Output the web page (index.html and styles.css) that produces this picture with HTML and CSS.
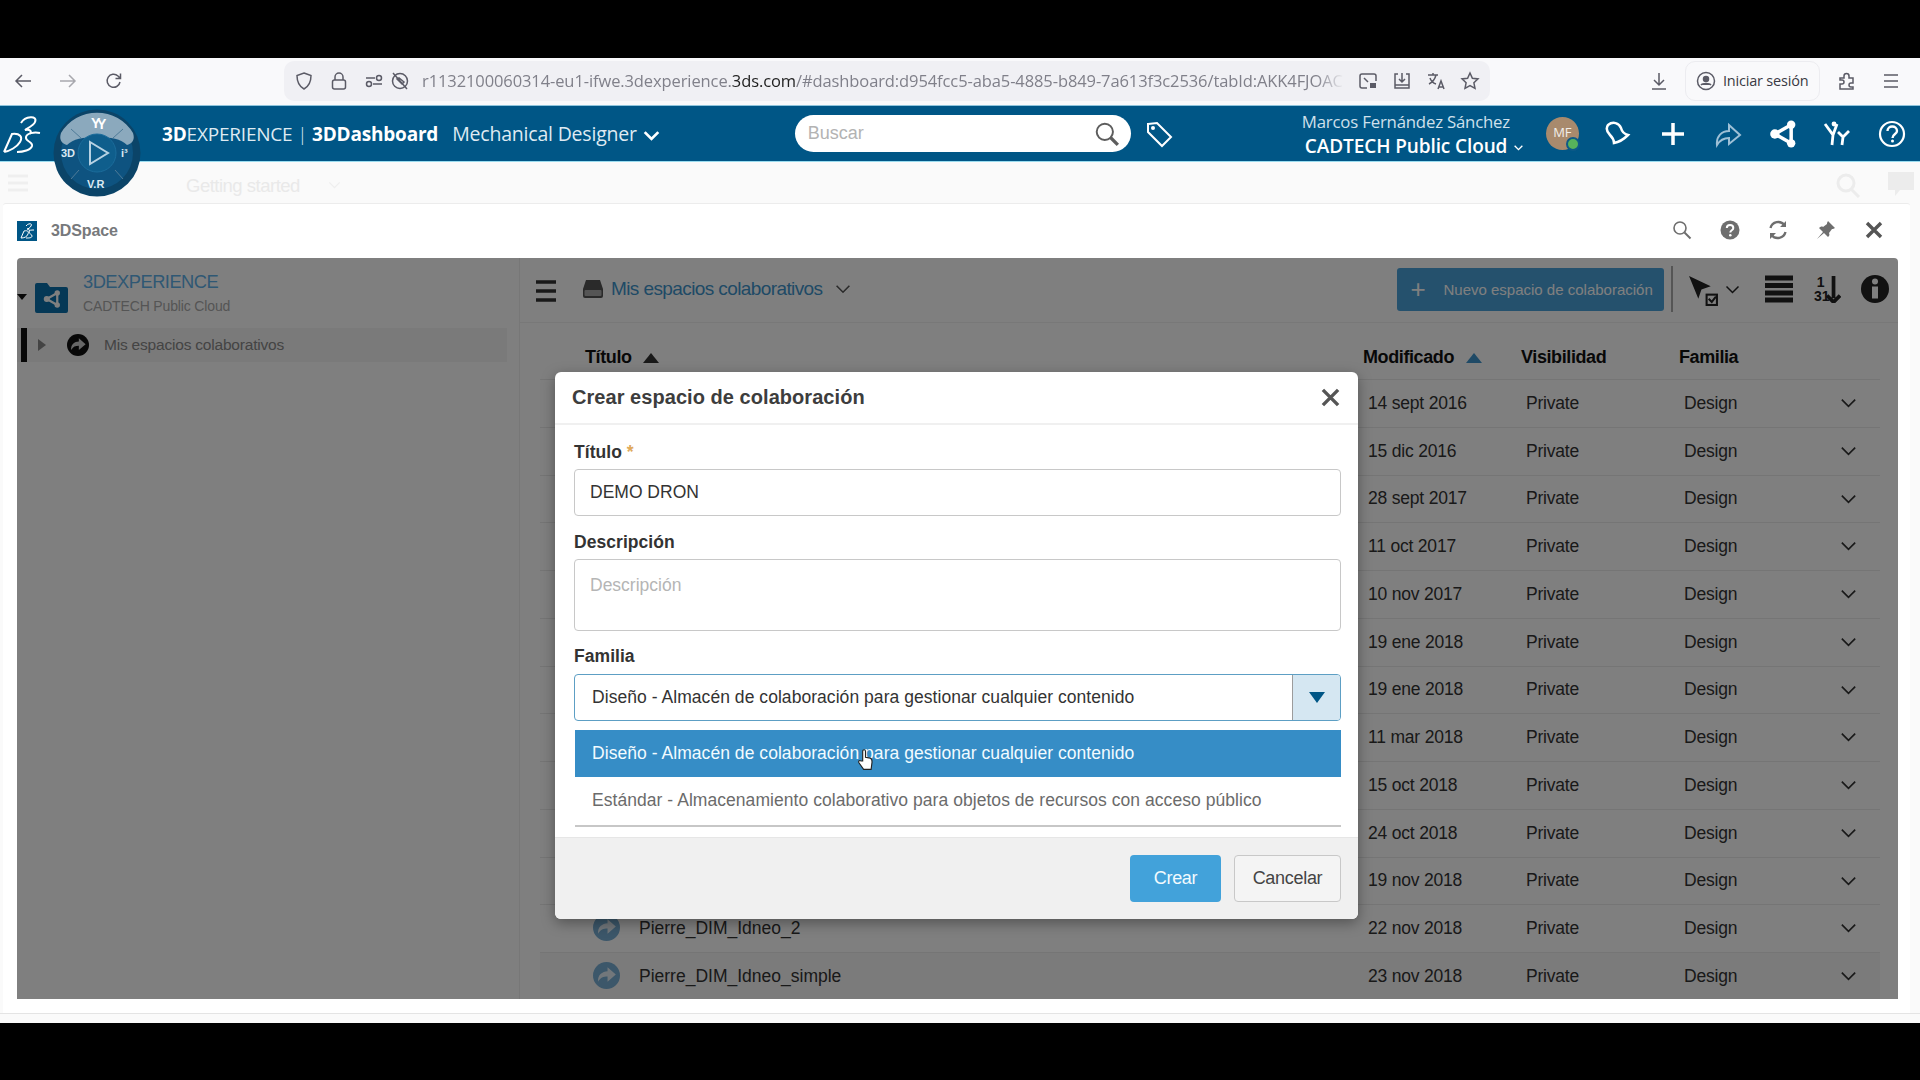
FILE: index.html
```html
<!DOCTYPE html>
<html lang="es">
<head>
<meta charset="utf-8">
<title>3DSpace</title>
<link rel="stylesheet" href="styles.css">
</head>
<body>
<svg class="defs" width="0" height="0">
  <symbol id="space" viewBox="0 0 26 26">
    <circle cx="13" cy="13" r="13" fill="currentColor"/>
    <path d="M5 19c-1-6 4-10 9-10V5l8 7-8 7v-5c-4 0-7 1-9 5z" fill="#fff" opacity=".8"/>
  </symbol>
  <symbol id="chev" viewBox="0 0 20 12">
    <path d="M2 2l8 8 8-8" fill="none" stroke="currentColor" stroke-width="2"/>
  </symbol>
  <symbol id="net" viewBox="0 0 24 24">
    <path d="M19 4L5 12l14 8z" fill="none" stroke="currentColor" stroke-width="3"/>
    <circle cx="19" cy="4" r="3.600" fill="currentColor"/><circle cx="5" cy="12" r="4" fill="currentColor"/><circle cx="19" cy="20" r="3.600" fill="currentColor"/>
  </symbol>
</svg>

<div class="band-top"></div>

<header class="browser">
  <svg class="bi bi-back" viewBox="0 0 20 20"><path d="M18 10H3M9 4l-6 6 6 6"/></svg>
  <svg class="bi bi-fwd" viewBox="0 0 20 20"><path d="M2 10h15M11 4l6 6-6 6"/></svg>
  <svg class="bi bi-reload" viewBox="0 0 20 20"><path d="M16 11a6.500 6.500 0 1 1-2-6l2.500 2.500M16.500 2.500v5h-5"/></svg>
  <div class="urlbar">
    <svg class="bi" viewBox="0 0 20 20"><path d="M10 2l7 2.500c0 6-1.500 10.500-7 13.500C4.500 15 3 10.500 3 4.500z"/></svg>
    <svg class="bi bi-lock" viewBox="0 0 20 20"><rect x="3.500" y="9" width="13" height="9" rx="2"/><path d="M6 9V6a4 4 0 0 1 8 0v3"/></svg>
    <svg class="bi bi-perm" viewBox="0 0 20 20"><path d="M2 7h9M9 13h9"/><circle cx="15" cy="7" r="2.500"/><circle cx="5" cy="13" r="2.500"/></svg>
    <svg class="bi bi-block" viewBox="0 0 20 20"><circle cx="10" cy="10" r="7.500"/><path d="M3 2l14 16M7 8l5 5 2-2-5-4z"/></svg>
    <div class="url"><span>r1132100060314-eu1-ifwe.3dexperience.</span><b>3ds.com</b><span>/#dashboard:d954fcc5-aba5-4885-b849-7a613f3c2536/tabId:AKK4FJOAC</span></div>
    <svg class="bi" viewBox="0 0 20 20"><path d="M9 17H4a2 2 0 0 1-2-2V5a2 2 0 0 1 2-2h12a2 2 0 0 1 2 2v5M6 7l4 4"/><rect x="12" y="12" width="6" height="5" fill="#5b5b66" stroke="none"/></svg>
    <svg class="bi" viewBox="0 0 20 20"><path d="M6 3H3v14h14V3h-3M10 2v9M7 8l3 3 3-3M3 14h14"/></svg>
    <svg class="bi" viewBox="0 0 20 20"><path d="M2 4h10M7 2v2M10 4c-1 4-3 7-7 9M4 7c1 3 3 5 6 6M12 18l3-8 3 8M13 16h4"/></svg>
    <svg class="bi" viewBox="0 0 20 20"><path d="M10 2l2.400 5.200 5.600.7-4.100 3.900 1.100 5.600-5-2.800-5 2.800 1.100-5.600L2 7.900l5.600-.7z"/></svg>
  </div>
  <svg class="bi bi-dl" viewBox="0 0 20 20"><path d="M10 2v11M5 9l5 5 5-5M3 18h14"/></svg>
  <div class="signin">
    <svg class="bi" viewBox="0 0 20 20"><circle cx="10" cy="10" r="8.500"/><circle cx="10" cy="8" r="2.500" fill="#5b5b66"/><path d="M5 14c1.500-2 8.500-2 10 0" fill="#5b5b66"/></svg>
    <span>Iniciar sesión</span>
  </div>
  <svg class="bi bi-ext" viewBox="0 0 20 20"><path d="M3 7h4V5a2.500 2.500 0 0 1 5 0v2h4v5h-2a2 2 0 0 0 0 4h2v2H3v-5h2a2 2 0 0 0 0-4H3z"/></svg>
  <svg class="bi bi-menu" viewBox="0 0 20 20"><path d="M3 4h14M3 10h14M3 16h14"/></svg>
</header>

<header class="apphead">
  <svg class="ds" viewBox="0 0 40 38"><path d="M20 8C24 1 37 0 34 7c-1 3-7 6-10 8 5-1 7 1 5 4M3 37l8-18c8-1 11 3 8 8-3 5-10 9-16 10M39 18c-6-1-13 0-14 4-1 5 7 4 6 9-1 4-9 6-15 6" fill="none" stroke="#fff" stroke-width="2"/></svg>
  <div class="brand"><b>3D</b>EXPERIENCE <i>|</i> <b>3DDashboard</b></div>
  <div class="role">Mechanical Designer</div>
  <svg class="rolechev" viewBox="0 0 20 12"><path d="M2 2l8 8 8-8" fill="none" stroke="#fff" stroke-width="3.200"/></svg>
  <div class="search">
    <span>Buscar</span>
    <svg class="searchicon" viewBox="0 0 24 24"><circle cx="10" cy="10" r="7.500" fill="none" stroke="#5d5d5d" stroke-width="1.800"/><path d="M15 15l7 7" stroke="#5d5d5d" stroke-width="3"/></svg>
  </div>
  <svg class="hi tag" viewBox="0 0 28 28"><path d="M3 4l9-1 14 14-9 9L3 12z" fill="none" stroke="#fff" stroke-width="2"/><circle cx="8" cy="8" r="2" fill="#fff"/></svg>
  <div class="user">
    <div class="uname">Marcos Fernández Sánchez</div>
    <div class="ucloud">CADTECH Public Cloud <svg class="cloudchev" viewBox="0 0 20 12"><path d="M3 2l7 7 7-7" fill="none" stroke="#fff" stroke-width="2.500"/></svg></div>
  </div>
  <div class="avatar">MF<span class="online"></span></div>
  <svg class="hi hi-bell" viewBox="0 0 28 28"><path d="M4 5c5-4 11-2 13 3 1 4 3 6 7 7-3 3-8 7-14 8 0-4-2-6-4-8C3 12 2 8 4 5z" fill="none" stroke="#fff" stroke-width="2.500"/></svg>
  <svg class="hi" viewBox="0 0 28 28"><path d="M14 3v22M3 14h22" stroke="#fff" stroke-width="3.500"/></svg>
  <svg class="hi" viewBox="0 0 28 28"><path d="M3 25c-1-9 5-14 12-14V5l11 10-11 9v-6c-5 0-9 2-12 7z" fill="none" stroke="#9ec0d6" stroke-width="2"/></svg>
  <svg class="hi hi-net" viewBox="0 0 24 24"><use href="#net"/></svg>
  <svg class="hi hi-yy" viewBox="0 0 28 28"><path d="M2 4l8 11-1 10M14 4l-4 11M15 12l5 5-1 8M26 11l-6 6" fill="none" stroke="#fff" stroke-width="2.800"/><circle cx="11" cy="4" r="2.400" fill="#fff"/></svg>
  <svg class="hi" viewBox="0 0 28 28"><circle cx="14" cy="14" r="12" fill="none" stroke="#fff" stroke-width="2.200"/><path d="M9.500 11c0-6 9.500-6 9.500 0 0 3-4.500 3-4.500 7" fill="none" stroke="#fff" stroke-width="2.400"/><circle cx="14.500" cy="21" r="1.500" fill="#fff"/></svg>
</header>

<svg class="compass" viewBox="0 0 88 88">
  <circle cx="44" cy="44" r="43.500" fill="#0b4468"/>
  <circle cx="44" cy="44" r="36" fill="#0e5380"/>
  <path d="M8 24a42 42 0 0 1 72 0c2 6 0 10-6 12-6-6-16-8-30-8s-24 2-30 8c-6-2-8-6-6-12z" fill="#8ba9bd"/>
  <circle cx="44" cy="44" r="19" fill="#0f5e8c" stroke="#1b6c9b" stroke-width="1"/>
  <path d="M37 33l18 11-18 11z" fill="none" stroke="#b7d2e3" stroke-width="2"/>
  <path d="M18 20l10 9M70 20l-10 9M26 61l-8 9M62 61l8 9" stroke="#4f7b98" stroke-width="1"/>
  <text x="8" y="48" class="ctext">3D</text>
  <text x="68" y="48" class="ctext">i³</text>
  <text x="34" y="79" class="ctext">V.R</text>
  <text x="38" y="19" class="ctext ctop">Y</text>
  <text x="44" y="20" class="ctext ctop">Y</text>
</svg>

<div class="tabbar">
  <svg class="tabham" viewBox="0 0 20 20"><path d="M0 3h20M0 10h20M0 17h20"/></svg>
  <span class="tabtitle">Getting started</span>
  <svg class="tabchev" viewBox="0 0 20 12"><use href="#chev"/></svg>
  <svg class="tabsearch" viewBox="0 0 26 26"><circle cx="11" cy="11" r="8" fill="none" stroke="#ececec" stroke-width="3"/><path d="M16 17l8 8" stroke="#ececec" stroke-width="3"/></svg>
  <svg class="tabchat" viewBox="0 0 26 26"><path d="M0 1h26v18H12l-5 6v-6H0z" fill="#ececec"/></svg>
</div>

<div class="cardwrap">
<main class="card">
  <div class="cardhead">
    <svg class="cardlogo" viewBox="0 0 20 20"><rect width="20" height="20" fill="#005686"/><path d="M9 5c2-3 7-3 5 0-1 2-3 3-4 3 2 0 3 1 2 2M4 17l3-7c4-1 5 1 4 3-1 3-4 4-7 4M17 9c-3 0-5 0-5 2 0 2 3 2 3 4s-3 2-6 2" fill="none" stroke="#fff" stroke-width="1"/></svg>
    <span class="cardtitle">3DSpace</span>
    <div class="cardacts">
      <svg class="ca" viewBox="0 0 20 20"><circle cx="8" cy="8" r="6" fill="none" stroke="#6e6e6e" stroke-width="1.600"/><path d="M12.500 12.500l6 6" stroke="#6e6e6e" stroke-width="2"/></svg>
      <svg class="ca" viewBox="0 0 20 20"><circle cx="10" cy="10" r="9.500" fill="#6e6e6e"/><path d="M6.800 8c0-4 6.500-4 6.500 0 0 2.500-3 2-3 4.500" fill="none" stroke="#fff" stroke-width="2"/><circle cx="10.300" cy="15.300" r="1.300" fill="#fff"/></svg>
      <svg class="ca" viewBox="0 0 20 20"><path d="M2.500 8a8 8 0 0 1 14-3M17.500 12a8 8 0 0 1-14 3" fill="none" stroke="#6e6e6e" stroke-width="2.400"/><path d="M18 1v6h-6zM2 19v-6h6z" fill="#6e6e6e"/></svg>
      <svg class="ca" viewBox="0 0 20 20"><path d="M12 1l7 7-2 1-1 0-3 4c1 2 0 3-1 4L8 13l-7 6 6-7-4-4c1-1 3-2 4-1l4-3 0-1z" fill="#6e6e6e"/></svg>
      <svg class="ca" viewBox="0 0 20 20"><path d="M3 3l14 14M17 3L3 17" stroke="#555" stroke-width="3.400"/></svg>
    </div>
  </div>

  <section class="panel">
    <aside class="tree">
      <div class="treehead">
        <span class="caretdown"></span>
        <svg class="folder" viewBox="0 0 33 30"><path d="M0 2a2 2 0 0 1 2-2h10l3 4h16a2 2 0 0 1 2 2v22a2 2 0 0 1-2 2H2a2 2 0 0 1-2-2z" fill="#0a70ad"/><svg x="8" y="7" width="18" height="18" viewBox="0 0 24 24" color="#fff"><use href="#net"/></svg></svg>
        <div class="treetitles">
          <div class="treetitle">3DEXPERIENCE</div>
          <div class="treesub">CADTECH Public Cloud</div>
        </div>
      </div>
      <div class="treerow">
        <span class="treebar"></span>
        <span class="caretright"></span>
        <svg class="treeicon" viewBox="0 0 26 26"><use href="#space"/></svg>
        <span class="treelabel">Mis espacios colaborativos</span>
      </div>
    </aside>

    <div class="content">
      <div class="toolbar">
        <svg class="ham" viewBox="0 0 20 22"><path d="M0 2h20M0 11h20M0 20h20"/></svg>
        <svg class="disk" viewBox="0 0 20 18"><path d="M3 0h14l3 9v7a2 2 0 0 1-2 2H2a2 2 0 0 1-2-2V9z" fill="#555"/><rect x="1.500" y="10" width="17" height="6" rx="1" fill="#aaa"/></svg>
        <span class="crumb">Mis espacios colaborativos</span>
        <svg class="crumbchev" viewBox="0 0 20 12"><use href="#chev"/></svg>
        <button class="newbtn"><span class="plus">+</span><span>Nuevo espacio de colaboración</span></button>
        <span class="sep"></span>
        <svg class="tool tool-sel" viewBox="0 0 30 30"><path d="M1 1l21 10-9 3-3 9z" fill="#222"/><rect x="18" y="19" width="10" height="10" fill="none" stroke="#222" stroke-width="2"/><path d="M20 23l3 3 4-5" fill="none" stroke="#222" stroke-width="2"/></svg>
        <svg class="selchev" viewBox="0 0 20 12"><use href="#chev"/></svg>
        <svg class="tool tool-lines" viewBox="0 0 28 28"><path d="M0 3h28M0 10.500h28M0 18h28M0 25h28" stroke="#222" stroke-width="5"/></svg>
        <svg class="tool tool-sort" viewBox="0 0 28 30"><path d="M21 1v24M14 22l7 7 7-7" fill="none" stroke="#222" stroke-width="4"/><text x="3" y="13" class="sortt">1</text><text x="0" y="28" class="sortt">31</text></svg>
        <svg class="tool tool-info" viewBox="0 0 28 28"><circle cx="14" cy="14" r="14" fill="#222"/><rect x="11" y="11.500" width="6" height="12" fill="#fff"/><circle cx="14" cy="6.500" r="3" fill="#fff"/></svg>
      </div>

      <div class="table">
        <div class="thead">
          <div class="th th-title">Título <span class="tri"></span></div>
          <div class="th">Modificado <span class="tri tri-blue"></span></div>
          <div class="th">Visibilidad</div>
          <div class="th">Familia</div>
        </div>
        <div class="tr"><svg class="rowicon"><use href="#space"/></svg><span class="name"></span><span>14 sept 2016</span><span>Private</span><span>Design</span><svg class="rowchev" viewBox="0 0 20 12"><use href="#chev"/></svg></div>
        <div class="tr"><svg class="rowicon"><use href="#space"/></svg><span class="name"></span><span>15 dic 2016</span><span>Private</span><span>Design</span><svg class="rowchev" viewBox="0 0 20 12"><use href="#chev"/></svg></div>
        <div class="tr"><svg class="rowicon"><use href="#space"/></svg><span class="name"></span><span>28 sept 2017</span><span>Private</span><span>Design</span><svg class="rowchev" viewBox="0 0 20 12"><use href="#chev"/></svg></div>
        <div class="tr"><svg class="rowicon"><use href="#space"/></svg><span class="name"></span><span>11 oct 2017</span><span>Private</span><span>Design</span><svg class="rowchev" viewBox="0 0 20 12"><use href="#chev"/></svg></div>
        <div class="tr"><svg class="rowicon"><use href="#space"/></svg><span class="name"></span><span>10 nov 2017</span><span>Private</span><span>Design</span><svg class="rowchev" viewBox="0 0 20 12"><use href="#chev"/></svg></div>
        <div class="tr"><svg class="rowicon"><use href="#space"/></svg><span class="name"></span><span>19 ene 2018</span><span>Private</span><span>Design</span><svg class="rowchev" viewBox="0 0 20 12"><use href="#chev"/></svg></div>
        <div class="tr"><svg class="rowicon"><use href="#space"/></svg><span class="name"></span><span>19 ene 2018</span><span>Private</span><span>Design</span><svg class="rowchev" viewBox="0 0 20 12"><use href="#chev"/></svg></div>
        <div class="tr"><svg class="rowicon"><use href="#space"/></svg><span class="name"></span><span>11 mar 2018</span><span>Private</span><span>Design</span><svg class="rowchev" viewBox="0 0 20 12"><use href="#chev"/></svg></div>
        <div class="tr"><svg class="rowicon"><use href="#space"/></svg><span class="name"></span><span>15 oct 2018</span><span>Private</span><span>Design</span><svg class="rowchev" viewBox="0 0 20 12"><use href="#chev"/></svg></div>
        <div class="tr"><svg class="rowicon"><use href="#space"/></svg><span class="name"></span><span>24 oct 2018</span><span>Private</span><span>Design</span><svg class="rowchev" viewBox="0 0 20 12"><use href="#chev"/></svg></div>
        <div class="tr"><svg class="rowicon"><use href="#space"/></svg><span class="name"></span><span>19 nov 2018</span><span>Private</span><span>Design</span><svg class="rowchev" viewBox="0 0 20 12"><use href="#chev"/></svg></div>
        <div class="tr"><svg class="rowicon"><use href="#space"/></svg><span class="name">Pierre_DIM_Idneo_2</span><span>22 nov 2018</span><span>Private</span><span>Design</span><svg class="rowchev" viewBox="0 0 20 12"><use href="#chev"/></svg></div>
        <div class="tr tr-last"><svg class="rowicon"><use href="#space"/></svg><span class="name">Pierre_DIM_Idneo_simple</span><span>23 nov 2018</span><span>Private</span><span>Design</span><svg class="rowchev" viewBox="0 0 20 12"><use href="#chev"/></svg></div>
      </div>
    </div>

    <div class="overlay"></div>

    <div class="modal">
      <div class="mhead">
        <span class="mtitle">Crear espacio de colaboración</span>
        <svg class="mclose" viewBox="0 0 20 20"><path d="M2 2l16 16M18 2L2 18" stroke="#555" stroke-width="3.600"/></svg>
      </div>
      <div class="mbody">
        <label class="flabel">Título <em>*</em></label>
        <div class="input">DEMO DRON</div>
        <label class="flabel flabel-2">Descripción</label>
        <div class="input textarea">Descripción</div>
        <label class="flabel flabel-3">Familia</label>
        <div class="select">
          <span class="selval">Diseño - Almacén de colaboración para gestionar cualquier contenido</span>
          <span class="selbtn"><span class="seltri"></span></span>
        </div>
        <ul class="options">
          <li class="opt opt-on">Diseño - Almacén de colaboración para gestionar cualquier contenido</li>
          <li class="opt">Estándar - Almacenamiento colaborativo para objetos de recursos con acceso público</li>
        </ul>
      </div>
      <div class="mfoot">
        <button class="btn btn-primary">Crear</button>
        <button class="btn btn-default">Cancelar</button>
      </div>
      <svg class="hand" viewBox="0 0 16 24"><path d="M5 13V3c0-2.500 3-2.500 3 0v6l5 1c2 .5 2 2 2 4l-1 8H6L1 15c-1-2 1-3 2-2z" fill="#fff" stroke="#222" stroke-width="1.200"/></svg>
    </div>
  </section>
</main>
</div>

<div class="cardgap"></div>
<div class="band-bottom"></div>
</body>
</html>
```

FILE: styles.css
```css
* { box-sizing: border-box; }
html, body { margin: 0; height: 1080px; }
body {
  position: relative;
  display: flex;
  flex-direction: column;
  overflow: hidden;
  background: #000;
  font-family: "Liberation Sans", Arial, sans-serif;
  color: #333;
}
.defs { position: absolute; }
svg { flex: none; display: block; }
.band-top { height: 58px; flex: none; background: #000; }
.band-bottom { height: 58px; flex: none; background: #000; }

/* Browser chrome */
.browser {
  flex: none;
  height: 47px;
  display: flex;
  align-items: center;
  padding-bottom: 2px;
  background: #f9f9fb;
}
.bi {
  width: 20px;
  height: 20px;
  fill: none;
  stroke: #5b5b66;
  stroke-width: 1.500;
}
.bi-back { margin-left: 13px; }
.bi-fwd { margin-left: 25px; stroke: #a8a8ae; }
.bi-reload { margin-left: 26px; margin-right: 160px; }
.urlbar {
  width: 1206px;
  height: 40px;
  display: flex;
  align-items: center;
  gap: 14px;
  padding-left: 10px;
  background: #f0f0f4;
  border-radius: 10px;
}
.bi-perm { margin-left: 1px; margin-right: -8px; }
.bi-lock { margin-left: 1px; }
.url {
  width: 922px;
  margin-left: -2px;
  overflow: hidden;
  white-space: nowrap;
  font-family: "Open Sans", sans-serif;
  font-size: 16.500px;
  letter-spacing: -.1px;
  color: #80808a;
  -webkit-mask-image: linear-gradient(to right, #000 97%, transparent);
  mask-image: linear-gradient(to right, #000 97%, transparent);
}
.url b { font-weight: 400; color: #222; }
.bi-dl { margin-left: 159px; }
.signin {
  width: 135px;
  height: 40px;
  margin-left: 16px;
  display: flex;
  align-items: center;
  gap: 7px;
  padding-left: 10px;
  border: 1px solid #ececf0;
  border-radius: 10px;
  font-family: "Open Sans", sans-serif;
  font-size: 14.500px;
  letter-spacing: -.2px;
  color: #3a3a44;
}
.bi-ext { margin-left: 17px; }
.bi-menu { margin-left: 24px; }

/* App header */
.apphead {
  flex: none;
  height: 57px;
  display: flex;
  align-items: center;
  background: #005686;
  border-top: 1px solid #8fc4dc;
  border-bottom: 1px solid #9adcef;
  color: #fff;
  font-family: "Open Sans", sans-serif;
}
.ds { width: 40px; height: 38px; margin-left: 1px; }
.brand {
  margin-left: 121px;
  font-size: 19px;
  letter-spacing: -.2px;
  color: #dfeaf2;
  white-space: nowrap;
}
.brand b { font-weight: 700; color: #fff; }
.brand i { font-style: normal; font-weight: 300; }
.role { margin-left: 14px; font-size: 19.500px; color: #dfeaf2; white-space: nowrap; letter-spacing: -.2px; }
.rolechev { width: 17px; height: 11px; margin-left: 6px; margin-top: 3px; }
.search {
  width: 336px;
  height: 37px;
  margin-left: 135px;
  display: flex;
  align-items: center;
  justify-content: space-between;
  padding: 0 11px 0 13px;
  background: #fff;
  border-radius: 19px;
  font-family: "Liberation Sans", sans-serif;
  font-size: 18px;
  color: #b3b3b3;
}
.searchicon { width: 26px; height: 26px; }
.hi { width: 28px; height: 28px; margin-left: 27px; }
.tag { margin-left: 14px; }
.user { width: 229px; margin-left: 129px; white-space: nowrap; }
.uname { font-size: 16.800px; line-height: 24px; color: #cfe0ec; letter-spacing: -.2px; }
.ucloud { display: flex; align-items: center; gap: 6px; margin-left: 3px; font-size: 19px; line-height: 24px; font-weight: 600; letter-spacing: -.1px; }
.cloudchev { width: 11px; height: 8px; margin-top: 4px; }
.avatar {
  position: relative;
  width: 33px;
  height: 33px;
  margin-left: 15px;
  border-radius: 50%;
  background: #a88a6d;
  font-size: 13px;
  line-height: 31px;
  text-align: center;
  color: #f3efe9;
}
.online {
  position: absolute;
  right: -1px;
  bottom: -1px;
  width: 14px;
  height: 14px;
  border-radius: 50%;
  background: #57b35b;
  border: 2px solid #0d5a87;
}
.hi-bell { margin-left: 25px; }
.hi-net { color: #fff; }
.hi-yy { margin-left: 26px; }

/* Compass */
.compass { position: absolute; left: 53px; top: 109px; width: 88px; height: 88px; }
.ctext { font: 700 11px "Liberation Sans", sans-serif; fill: #dce9f2; }
.ctop { fill: #fff; font-size: 14px; }

/* Tab bar */
.tabbar {
  flex: none;
  height: 41px;
  display: flex;
  align-items: center;
  background: #fafafa;
}
.tabham { width: 20px; height: 20px; margin-left: 8px; stroke: #efefef; stroke-width: 3; fill: none; }
.tabtitle { margin-left: 158px; margin-top: 6px; font-size: 18.500px; letter-spacing: -.5px; color: #e9e9e9; }
.tabchev { width: 13px; height: 8px; margin-left: 28px; margin-top: 4px; color: #efefef; }
.tabsearch { width: 26px; height: 26px; margin-left: auto; margin-top: 4px; }
.tabchat { width: 26px; height: 26px; margin-left: 27px; margin-right: 6px; margin-top: 2px; }

/* Card */
.cardwrap { flex: none; padding: 0 10px 0 3px; background: #fafafa; }
.card {
  height: 810px;
  display: flex;
  flex-direction: column;
  background: #fff;
  border-top: 1px solid #ececec;
  border-radius: 3px 3px 0 0;
}
.cardhead {
  flex: none;
  height: 54px;
  display: flex;
  align-items: center;
  padding-left: 14px;
}
.cardlogo { width: 20px; height: 20px; }
.cardtitle { margin-left: 14px; font-size: 16px; font-weight: 700; color: #77797c; letter-spacing: -.1px; }
.cardacts { margin-left: auto; display: flex; gap: 28px; margin-right: 26px; margin-top: -2px; }
.ca { width: 20px; height: 20px; }
.cardgap { flex: none; height: 10px; background: #fafafa; border-top: 1px solid #e4e4e4; }

/* Panel */
.panel {
  position: relative;
  flex: none;
  height: 741px;
  margin: 0 12px 0 14px;
  display: flex;
  border-radius: 4px 4px 0 0;
  overflow: hidden;
  background: #fff;
}
.overlay { position: absolute; inset: 0; background: rgba(0, 0, 0, .5); }

/* Tree */
.tree { flex: none; width: 503px; border-right: 1px solid #efefef; }
.treehead { height: 70px; display: flex; align-items: center; }
.caretdown { width: 0; height: 0; margin: 8px 0 0 0; border: 5px solid transparent; border-top: 6px solid #111; border-bottom: 0; }
.folder { width: 33px; height: 30px; margin-left: 8px; margin-top: 9px; }
.treetitles { margin-left: 15px; margin-top: 0; }
.treetitle { font-size: 18.300px; line-height: 26px; letter-spacing: -.5px; color: #5fb0e8; }
.treesub { font-size: 14px; line-height: 22px; letter-spacing: -.15px; color: #aaa; }
.treerow { width: 490px; height: 34px; display: flex; align-items: center; background: #f4f4f4; color: #111; }
.treebar { width: 6px; height: 34px; margin-left: 4px; background: #111; }
.caretright { width: 0; height: 0; margin-left: 11px; border: 6px solid transparent; border-left: 8px solid #888; border-right: 0; }
.treeicon { width: 22px; height: 22px; margin-left: 21px; }
.treelabel { margin-left: 15px; font-size: 15.500px; letter-spacing: -.2px; color: #888; }

/* Content */
.content { flex: 1; min-width: 0; }
.toolbar {
  height: 65px;
  display: flex;
  align-items: center;
  padding-bottom: 2px;
  border-bottom: 1px solid #f0f0f0;
}
.ham { width: 22px; height: 22px; margin-left: 15px; margin-top: 3px; stroke: #333; stroke-width: 3.600; fill: none; }
.disk { width: 20px; height: 18px; margin-left: 26px; }
.crumb { margin-left: 8px; font-size: 19px; letter-spacing: -.6px; color: #3f94cc; white-space: nowrap; }
.crumbchev { width: 16px; height: 10px; margin-left: 13px; color: #555; }
.newbtn {
  width: 267px;
  height: 43px;
  margin-left: 546px;
  display: flex;
  align-items: center;
  padding: 0 0 0 13px;
  border: 0;
  border-radius: 3px;
  background: #4aa3db;
  color: #fff;
  font: 15px "Liberation Sans", sans-serif;
  white-space: nowrap;
}
.plus { width: 33px; text-align: left; font-size: 26px; line-height: 26px; color: #fff; }
.sep { width: 2px; height: 46px; margin-left: 7px; background: #aaa; }
.tool { width: 28px; height: 28px; }
.tool-sel { width: 31px; height: 31px; margin-left: 15px; margin-top: 3px; }
.selchev { width: 15px; height: 9px; margin-left: 6px; color: #222; }
.tool-lines { margin-left: 25px; }
.tool-sort { margin-left: 20px; }
.tool-info { margin-left: 20px; }
.sortt { font: 700 15px "Liberation Sans", sans-serif; fill: #222; }

/* Table */
.table { width: 1340px; margin-left: 20px; }
.thead, .tr {
  display: grid;
  grid-template-columns: 828px 158px 158px 1fr;
  align-items: center;
}
.thead { height: 57px; padding-top: 12px; border-bottom: 1px solid #eaeaea; }
.th { margin-left: -5px; font-size: 18px; font-weight: 700; letter-spacing: -.4px; color: #111; white-space: nowrap; }
.th-title { padding-left: 45px; margin-left: 0; }
.tri { display: inline-block; width: 0; height: 0; margin-left: 7px; border: 8.500px solid transparent; border-bottom: 10px solid #333; border-top: 0; }
.tri-blue { border-bottom-color: #3f94cc; }
.tr {
  position: relative;
  height: 47.750px;
  border-bottom: 1px solid #eaeaea;
  font-size: 17.500px;
  letter-spacing: -.2px;
  color: #333;
  white-space: nowrap;
}
.tr-last { background: #f6f6f6; }
.rowicon { position: absolute; left: 53px; top: 9px; width: 27px; height: 27px; color: #78aed4; }
.name { padding-left: 99px; letter-spacing: 0; }
.rowchev { position: absolute; right: 23px; top: 18px; width: 17px; height: 10px; color: #333; }

/* Modal */
.modal {
  position: absolute;
  left: 538px;
  top: 114px;
  width: 803px;
  height: 547px;
  display: flex;
  flex-direction: column;
  background: #fff;
  border-radius: 6px;
  box-shadow: 0 4px 14px rgba(0, 0, 0, .35);
}
.mhead {
  flex: none;
  height: 53px;
  display: flex;
  align-items: center;
  justify-content: space-between;
  padding: 0 18px 0 17px;
  border-bottom: 2px solid #f0f0f0;
}
.mtitle { font-size: 20px; font-weight: 700; letter-spacing: .05px; color: #3d3d3d; }
.mclose { width: 19px; height: 19px; }
.mbody { flex: 1; padding: 15px 17px 0 19px; }
.flabel { display: block; height: 25px; margin-bottom: 4px; font-size: 17.500px; line-height: 25px; font-weight: 700; letter-spacing: .05px; color: #333; }
.flabel em { font-style: normal; color: #e0a95a; }
.flabel-2 { margin-top: 14px; }
.flabel-3 { margin-top: 13px; margin-bottom: 5px; }
.input {
  height: 47px;
  padding-left: 15px;
  border: 1px solid #c8c8c8;
  border-radius: 4px;
  font-size: 17.500px;
  line-height: 44px;
  letter-spacing: 0;
  color: #333;
}
.textarea { height: 72px; line-height: 50px; color: #b5b5b5; }
.select {
  height: 47px;
  display: flex;
  border: 1px solid #5d9fc4;
  border-radius: 4px;
  overflow: hidden;
  font-size: 17.500px;
  letter-spacing: .05px;
  color: #333;
}
.selval { flex: 1; padding-left: 17px; line-height: 45px; }
.selbtn { width: 48px; display: flex; align-items: center; justify-content: center; background: #d5e7f2; border-left: 1px solid #9c9c9c; }
.seltri { width: 0; height: 0; border: 8px solid transparent; border-top: 11px solid #005686; border-bottom: 0; }
.options { margin: 9px 0 0 1px; padding: 0; list-style: none; border-bottom: 2px solid #c7c7c7; }
.opt { height: 48px; padding-left: 17px; font-size: 17.500px; line-height: 46px; letter-spacing: .05px; color: #6b6b6b; white-space: nowrap; }
.opt-on { height: 47px; background: #368dc6; color: #f2fbff; }
.mfoot {
  flex: none;
  height: 82px;
  display: flex;
  justify-content: flex-end;
  align-items: center;
  gap: 13px;
  padding-right: 17px;
  background: #f0f0f0;
  border-top: 1px solid #e6e6e6;
  border-radius: 0 0 6px 6px;
}
.btn { height: 47px; border-radius: 4px; font: 18px "Liberation Sans", sans-serif; letter-spacing: -.3px; }
.btn-primary { width: 91px; background: #42a2da; border: 0; color: #f1fafe; }
.btn-default { width: 107px; background: #f4f4f4; border: 1px solid #c8c8c8; color: #444; }
.hand { position: absolute; left: 303px; top: 376px; width: 15px; height: 24px; }
```
